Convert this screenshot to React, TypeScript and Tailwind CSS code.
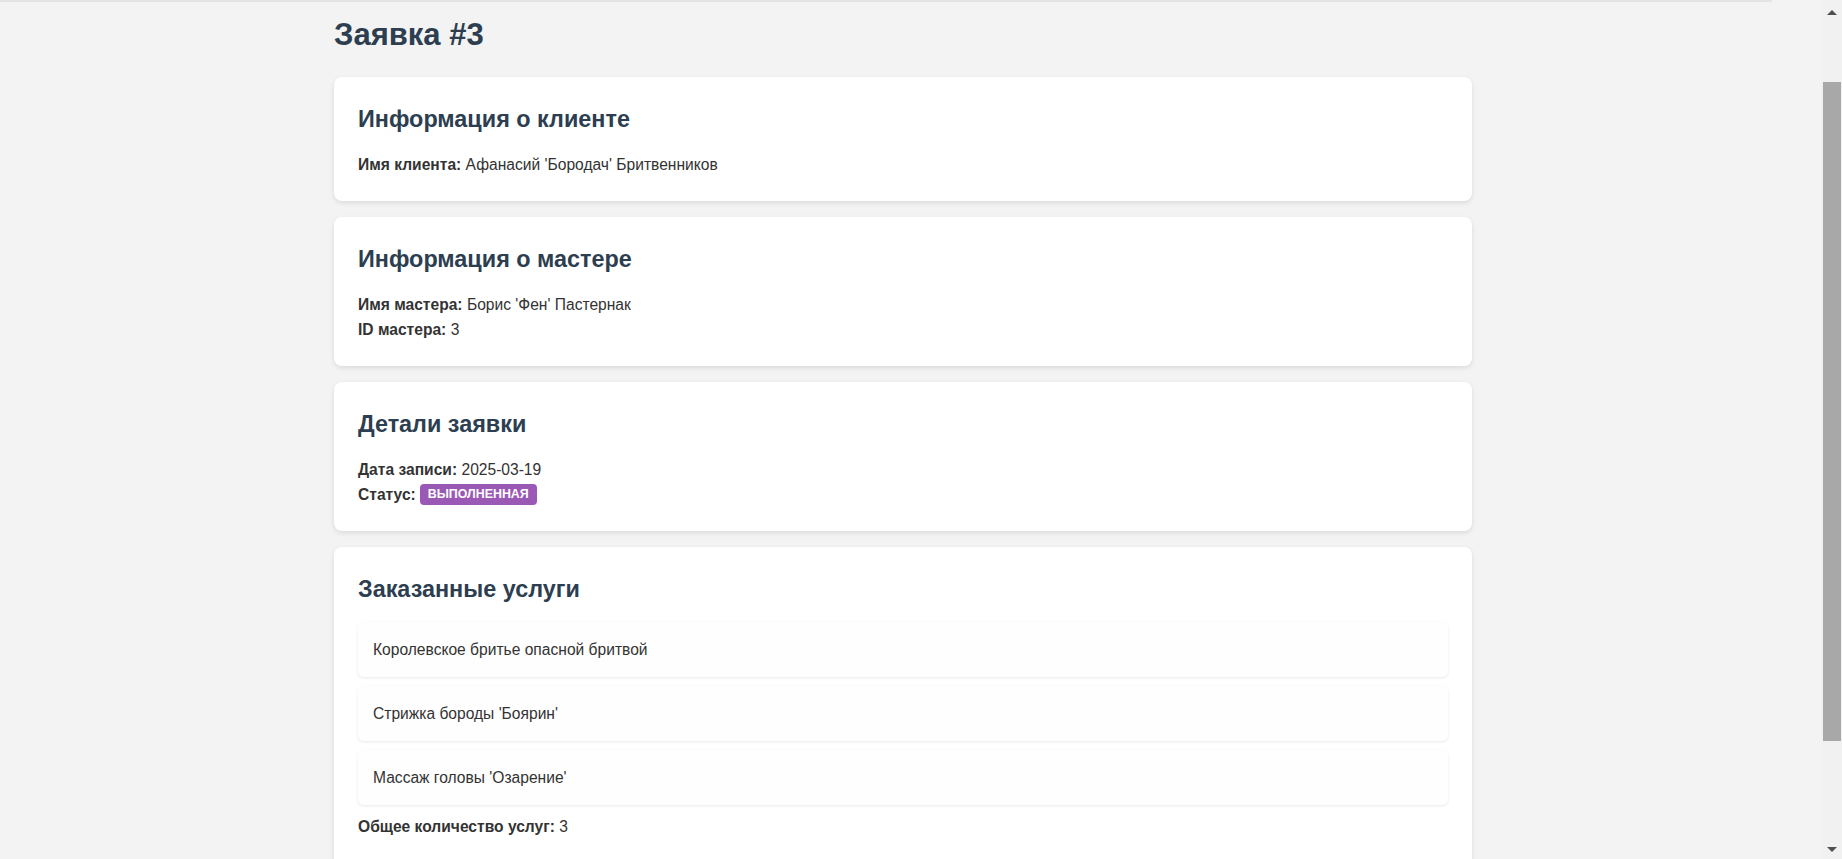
import React from 'react'

const font = { fontFamily: '"Liberation Sans", Arial, sans-serif' }

function Card({ title, children }: { title: string; children: React.ReactNode }) {
  return (
    <section className="rounded-lg bg-white p-6 shadow-[0_2px_5px_rgba(0,0,0,0.1)]">
      <h2 className="mb-[15px] text-[23.4px] font-bold leading-9 text-[#2c3e50]">{title}</h2>
      {children}
    </section>
  )
}

function Row({ label, children }: { label: string; children: React.ReactNode }) {
  return (
    <p className="text-[15.6px] leading-[25px] text-[#333]">
      <strong className="font-bold">{label}</strong> {children}
    </p>
  )
}

const services = [
  'Королевское бритье опасной бритвой',
  "Стрижка бороды 'Боярин'",
  "Массаж головы 'Озарение'",
]

function Scrollbar() {
  return (
    <div className="flex h-full w-[21px] shrink-0 flex-col items-center bg-[#f1f1f1]">
      <div className="mt-[10px] h-0 w-0 border-x-[5px] border-b-[5px] border-x-transparent border-b-[#505050]" />
      <div className="mt-[67px] ml-[2px] h-[659px] w-[18px] self-start bg-[#a8a8a8]" />
      <div className="mt-auto mb-[7px] h-0 w-0 border-x-[5px] border-t-[5px] border-x-transparent border-t-[#505050]" />
    </div>
  )
}

export default function App() {
  return (
    <div className="flex h-[859px] w-full overflow-hidden bg-[#f3f3f3]" style={font}>
      <main className="min-w-0 flex-1 overflow-hidden">
        <div className="h-[2px] w-[1772px] bg-[#e4e4e4]" />
        <div className="pl-[334px]">
          <div className="w-[1138px]">
            <h1 className="mt-[9px] mb-[18px] text-[31px] font-bold leading-12 text-[#2c3e50]">Заявка #3</h1>

            <div className="flex flex-col gap-4">
              <Card title="Информация о клиенте">
                <Row label="Имя клиента:">Афанасий 'Бородач' Бритвенников</Row>
              </Card>

              <Card title="Информация о мастере">
                <Row label="Имя мастера:">Борис 'Фен' Пастернак</Row>
                <Row label="ID мастера:">3</Row>
              </Card>

              <Card title="Детали заявки">
                <Row label="Дата записи:">2025-03-19</Row>
                <p className="flex items-center text-[15.6px] leading-[25px] text-[#333]">
                  <strong className="font-bold">Статус:</strong>
                  <span className="ml-[4px] inline-flex h-[21px] items-center rounded bg-[#9b59b6] px-2 text-[12.4px] font-bold uppercase leading-none text-white">
                    Выполненная
                  </span>
                </p>
              </Card>

              <Card title="Заказанные услуги">
                <div className="flex flex-col gap-[9px]">
                  {services.map((s) => (
                    <div
                      key={s}
                      className="rounded-[5px] bg-[#fefefe] px-[15px] py-[15px] text-[15.6px] leading-[25px] text-[#333] shadow-[0_1px_3px_rgba(0,0,0,0.09)]"
                    >
                      {s}
                    </div>
                  ))}
                  <Row label="Общее количество услуг:">3</Row>
                </div>
                <div className="h-24" />
              </Card>
            </div>
          </div>
        </div>
      </main>
      <Scrollbar />
    </div>
  )
}
